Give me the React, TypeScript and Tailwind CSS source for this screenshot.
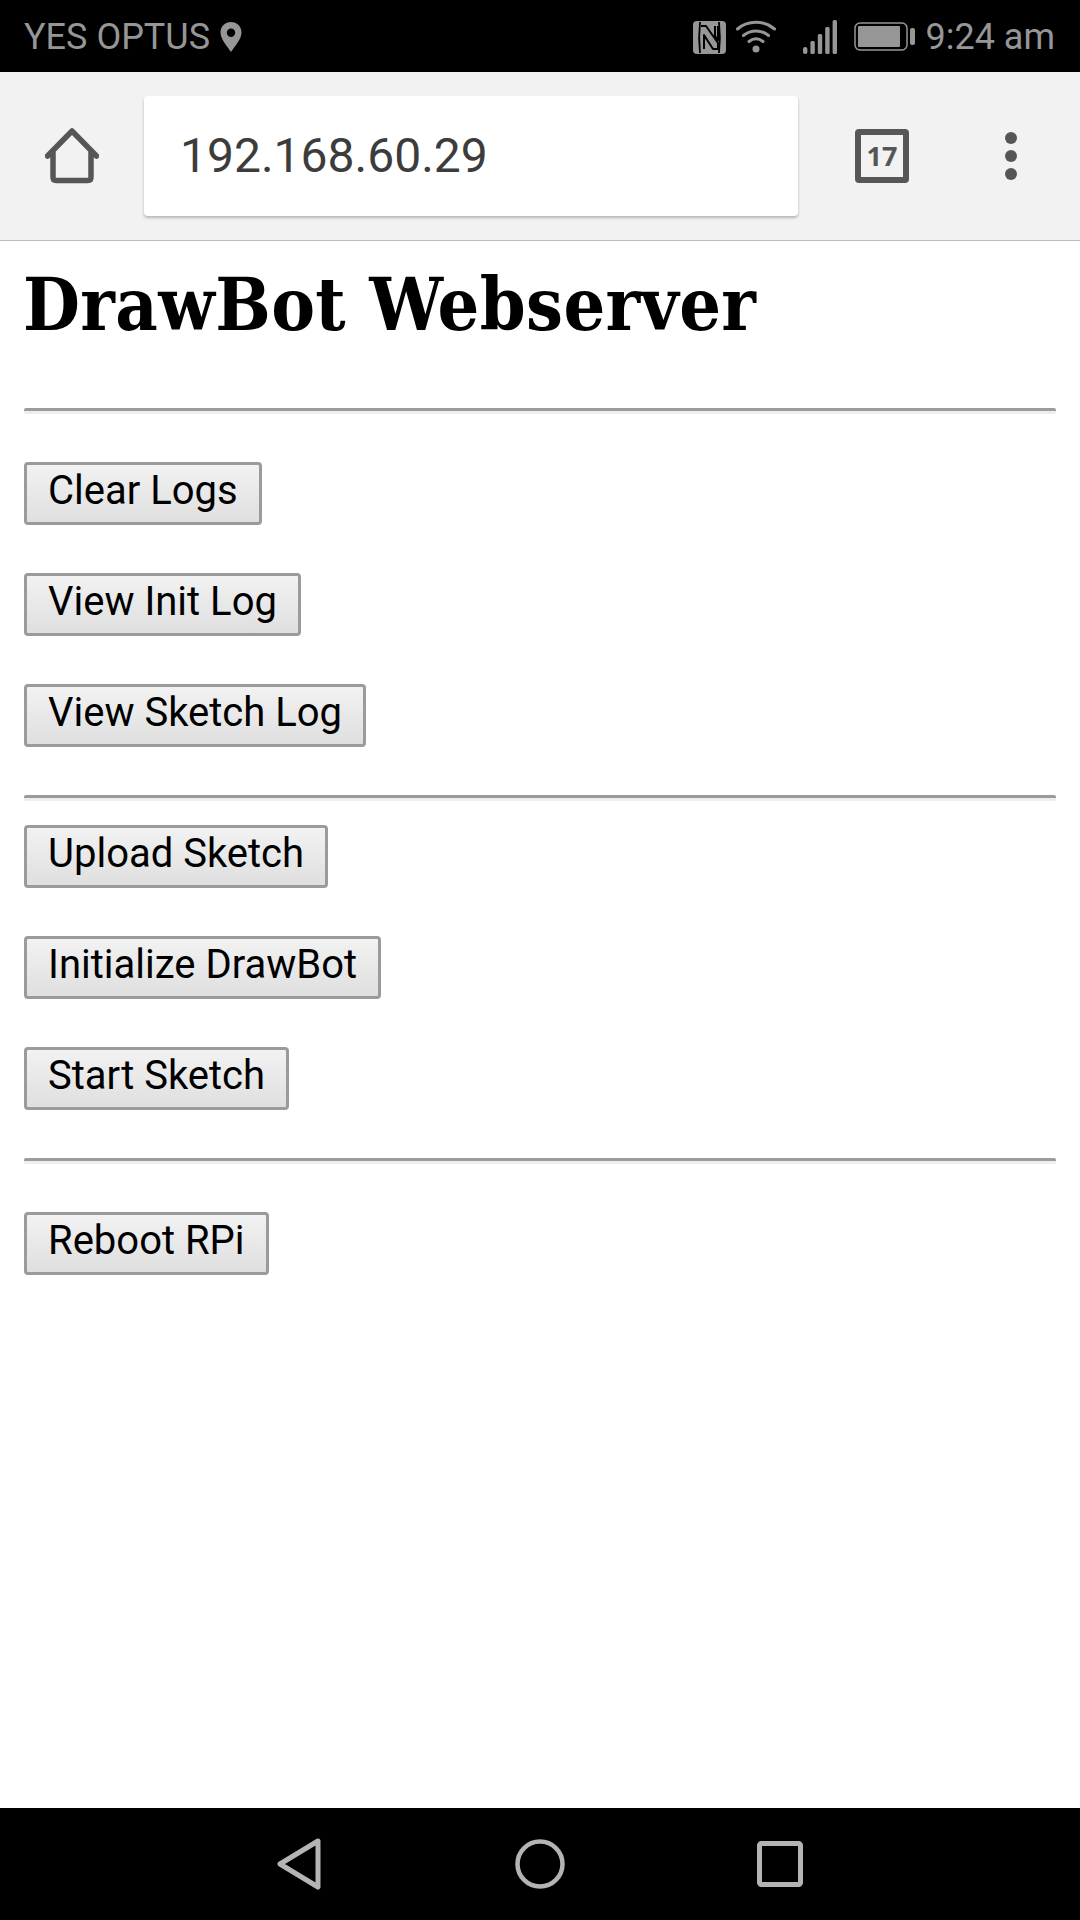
import React from 'react';

function Btn({ label }: { label: string }) {
  return (
    <button className="block h-[63px] pl-[21px] pr-[21px] pb-[5px] rounded-[4px] border-[3px] border-[#9b9b9b] bg-gradient-to-b from-[#f2f2f2] to-[#dfdfdf] text-[40px] leading-none text-black font-['Roboto',sans-serif] whitespace-nowrap">
      {label}
    </button>
  );
}

function Rule() {
  return <div className="h-[6px] rounded-[2px] border-t-[3px] border-[#9b9b9b] bg-[#eeeeee]" />;
}

export default function App() {
  return (
    <div className="flex flex-col h-[1920px] w-[1080px] bg-white font-['Roboto',sans-serif] overflow-hidden">
      {/* Status bar */}
      <div className="h-[72px] bg-black flex items-center justify-between pl-[24px] pr-[25px] pt-[2px] text-[#969696] text-[36px]">
        <div className="flex items-center gap-[10px]">
          <span>YES OPTUS</span>
          <svg width="22" height="30" viewBox="0 0 22 30">
            <path fill="#969696" fillRule="evenodd" d="M11 0C5 0 0.500 4.600 0.500 10.500 0.500 17 7 24 11 30 15 24 21.500 17 21.500 10.500 21.500 4.600 17 0 11 0ZM11 6.500A4.200 4.200 0 1 1 11 14.900 4.200 4.200 0 0 1 11 6.500Z" />
          </svg>
        </div>
        <div className="flex items-center">
          {/* NFC */}
          <svg width="33" height="33" viewBox="0 0 33 33" className="mr-[10px]">
            <rect x="0" y="0" width="33" height="33" rx="4" fill="#969696" />
            <path d="M7 1 C6 10 6 23 7 32 M26 1 C27 10 27 23 26 32" stroke="#000" strokeWidth="1.800" fill="none" />
            <path d="M8 5 H13 L25 22 V28 L20 28 L11 14 V28 M25 5 V19 L22 15 V5" stroke="#000" strokeWidth="2" fill="none" strokeLinejoin="round" />
          </svg>
          {/* wifi */}
          <svg width="40" height="34" viewBox="0 0 40 34" className="mr-[27px]">
            <path d="M1.500 9C12 0 28 0 38.500 9M7.500 15.500C15 9.500 25 9.500 32.500 15.500M13 21.500C17.500 18 22.500 18 27 21.500" stroke="#969696" strokeWidth="3" fill="none" strokeLinecap="round" />
            <circle cx="20" cy="29" r="3.500" fill="#969696" />
          </svg>
          {/* signal */}
          <svg width="36" height="34" viewBox="0 0 36 34" className="mr-[15px]">
            <rect x="0" y="27" width="4.400" height="7" rx="2" fill="#969696" />
            <rect x="7.400" y="21" width="4.400" height="13" rx="1.500" fill="#969696" />
            <rect x="14.800" y="14" width="4.400" height="20" rx="1.500" fill="#969696" />
            <rect x="22.200" y="7" width="4.400" height="27" rx="1.500" fill="#969696" />
            <rect x="29.600" y="0" width="4.400" height="34" rx="1.500" fill="#969696" />
          </svg>
          {/* battery */}
          <svg width="61" height="30" viewBox="0 0 61 30" className="mr-[11px]">
            <rect x="1" y="1" width="52" height="27" rx="5" stroke="#969696" strokeWidth="1.500" fill="none" />
            <rect x="4" y="4" width="42" height="21" rx="1" fill="#969696" />
            <rect x="56" y="6" width="5" height="17" rx="2" fill="#969696" />
          </svg>
          <span>9:24 am</span>
        </div>
      </div>

      {/* Browser toolbar */}
      <div className="h-[169px] bg-[#f2f2f2] border-b-[1px] border-[#bdbdbd] flex items-center shrink-0">
        <div className="w-[144px] flex justify-center pb-[1px]">
          <svg width="54" height="56" viewBox="0 0 54 56">
            <path d="M2.500 28 L27 3 L51.500 28 M8 24 V49 Q8 52.500 11 52.500 H43 Q46 52.500 46 49 V24" stroke="#565656" strokeWidth="5.500" fill="none" strokeLinecap="round" strokeLinejoin="round" />
          </svg>
        </div>
        <div className="w-[654px] h-[120px] bg-white rounded-[4px] shadow-[0_2px_3px_rgba(0,0,0,0.25)] flex items-center pl-[36px] text-[48px] text-[#3c3c3c]">
          192.168.60.29
        </div>
        <div className="flex-1 flex items-center pl-[57px]">
          <div className="w-[54px] h-[54px] rounded-[4px] border-[6px] border-[#565656] flex items-center justify-center text-[27px] font-bold text-[#565656] font-['Open_Sans',sans-serif]">
            17
          </div>
          <div className="ml-[96px] flex flex-col gap-[6px]">
            <span className="block w-[12px] h-[12px] rounded-full bg-[#565656]" />
            <span className="block w-[12px] h-[12px] rounded-full bg-[#565656]" />
            <span className="block w-[12px] h-[12px] rounded-full bg-[#565656]" />
          </div>
        </div>
      </div>

      {/* Page */}
      <div className="flex-1 px-[24px] flex flex-col">
        <h1 className="mt-[21px] -ml-[1px] text-[73px] tracking-[0.4px] leading-[84px] font-bold font-stretch-condensed text-black font-['DejaVu_Serif',serif] h-[84px] whitespace-nowrap">
          DrawBot Webserver
        </h1>
        <div className="mt-[62px]"><Rule /></div>
        <div className="mt-[48px] flex flex-col items-start gap-[48px]">
          <Btn label="Clear Logs" />
          <Btn label="View Init Log" />
          <Btn label="View Sketch Log" />
        </div>
        <div className="mt-[48px]"><Rule /></div>
        <div className="mt-[24px] flex flex-col items-start gap-[48px]">
          <Btn label="Upload Sketch" />
          <Btn label="Initialize DrawBot" />
          <Btn label="Start Sketch" />
        </div>
        <div className="mt-[48px]"><Rule /></div>
        <div className="mt-[48px]">
          <Btn label="Reboot RPi" />
        </div>
      </div>

      {/* Nav bar */}
      <div className="h-[112px] bg-black flex items-center pl-[277px]">
        <svg width="46" height="52" viewBox="0 0 46 52">
          <path d="M41 3 L3 26 L41 49 Z" stroke="#b4b4b4" strokeWidth="5" fill="none" strokeLinejoin="round" />
        </svg>
        <svg width="50" height="50" viewBox="0 0 50 50" className="ml-[192px]">
          <ellipse cx="25" cy="25" rx="22.500" ry="22.500" stroke="#b4b4b4" strokeWidth="4.500" fill="none" />
        </svg>
        <svg width="46" height="46" viewBox="0 0 46 46" className="ml-[192px]">
          <rect x="2.500" y="2.500" width="41" height="41" rx="2" stroke="#b4b4b4" strokeWidth="5" fill="none" />
        </svg>
      </div>
    </div>
  );
}
